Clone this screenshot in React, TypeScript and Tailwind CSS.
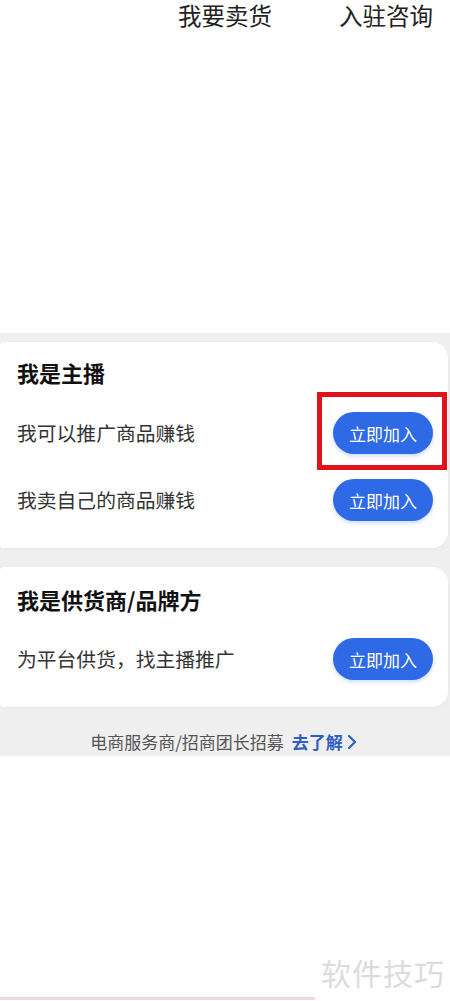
import React from "react";

const font = { fontFamily: '"Noto Sans CJK SC", "Noto Sans", sans-serif' };

function JoinButton() {
  return (
    <button className="w-[100px] h-[42px] rounded-full bg-[#2f6ae6] text-white text-[17px] leading-none shadow-[0_2px_4px_rgba(47,106,230,0.25)]">
      立即加入
    </button>
  );
}

function Row({ text, children }: { text: string; children?: React.ReactNode }) {
  return (
    <div className="flex items-center justify-between pr-[15px]">
      <span className="text-[19.8px] text-[#333] leading-none">{text}</span>
      <div className="relative">
        <JoinButton />
        {children}
      </div>
    </div>
  );
}

export default function App() {
  return (
    <div className="relative w-[450px] h-[1001px] bg-white overflow-hidden" style={font}>
      <div className="h-[333px] flex justify-end gap-[67px] pr-[17px]">
        <span className="text-[23.5px] text-[#222] leading-[30px]">我要卖货</span>
        <span className="text-[23.5px] text-[#222] leading-[30px]">入驻咨询</span>
      </div>
      <div className="bg-[#efefef] pt-[9px] pr-[2px] h-[423px]">
        <div className="bg-white rounded-r-[16px] rounded-l-[4px] pl-[17px] pt-[15px] pb-[27px] shadow-[0_1px_3px_rgba(0,0,0,0.04)]">
          <div className="text-[22px] font-bold text-[#111] leading-[30px]">我是主播</div>
          <div className="mt-[25px]">
            <Row text="我可以推广商品赚钱">
              <div className="absolute left-[-16px] top-[-20px] w-[130px] h-[78px] border-[5px] border-[#e0131d]" />
            </Row>
          </div>
          <div className="mt-[25px]">
            <Row text="我卖自己的商品赚钱" />
          </div>
        </div>
        <div className="mt-[19px] bg-white rounded-r-[16px] rounded-l-[4px] pl-[17px] pt-[17px] pb-[27px] shadow-[0_1px_3px_rgba(0,0,0,0.04)]">
          <div className="text-[22px] font-bold text-[#111] leading-[30px]">我是供货商/品牌方</div>
          <div className="mt-[24px]">
            <Row text="为平台供货，找主播推广" />
          </div>
        </div>
        <div className="flex items-center justify-center mt-[24px] text-[17px] leading-[22px]">
          <span className="text-[#555]">电商服务商/招商团长招募</span>
          <span className="ml-[8px] font-bold text-[#2d5fc4]">去了解</span>
          <svg width="12" height="16" viewBox="0 0 12 16" className="ml-[3px]">
            <path d="M3 2 L9 8 L3 14" fill="none" stroke="#2d5fc4" strokeWidth="2.2" strokeLinecap="round" strokeLinejoin="round" />
          </svg>
        </div>
      </div>
      <div className="absolute right-[5px] bottom-[14px] text-[30px] text-[#dcdcdc] leading-none tracking-[1px]">软件技巧</div>
      <div className="absolute left-0 bottom-[1px] w-[315px] h-[3px] bg-[#f0d7de]" />
    </div>
  );
}
